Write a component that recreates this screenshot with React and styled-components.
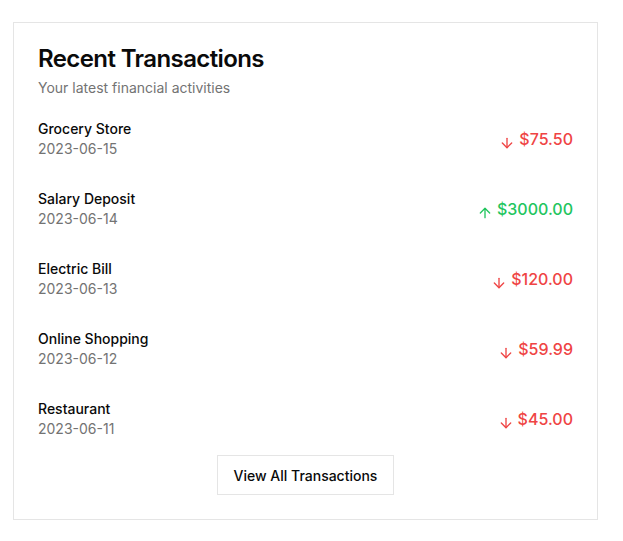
import React from "react";
import styled, { createGlobalStyle } from "styled-components";

const Global = createGlobalStyle`
  html, body { margin: 0; padding: 0; background: #ffffff; }
  body { font-family: Inter, "Liberation Sans", sans-serif; color: #0a0a0a; }
  * { box-sizing: border-box; }
`;

const Page = styled.div`
  padding: 22px 0 0 13px;
`;

const Card = styled.section`
  width: 585px;
  border: 1px solid #e5e5e5;
  background: #fff;
  padding: 24px;
  display: flex;
  flex-direction: column;
`;

const Header = styled.header`
  display: flex;
  flex-direction: column;
  gap: 7px;
  margin-bottom: 21px;
`;

const Title = styled.h2`
  margin: 0;
  font-size: 24px;
  line-height: 1;
  font-weight: 600;
  letter-spacing: -0.025em;
  color: #0a0a0a;
`;

const Subtitle = styled.p`
  margin: 0;
  font-size: 14px;
  line-height: 20px;
  color: #737373;
`;

const List = styled.ul`
  list-style: none;
  margin: 0;
  padding: 0;
  display: flex;
  flex-direction: column;
  gap: 30px;
`;

const Row = styled.li`
  display: flex;
  align-items: center;
  justify-content: space-between;
`;

const Info = styled.div`
  display: flex;
  flex-direction: column;
`;

const Name = styled.span`
  font-size: 14px;
  line-height: 20px;
  font-weight: 500;
  color: #0a0a0a;
`;

const DateText = styled.span`
  font-size: 14px;
  line-height: 20px;
  color: #737373;
`;

const Amount = styled.span`
  display: flex;
  align-items: center;
  gap: 4px;
  font-size: 16px;
  line-height: 24px;
  font-weight: 500;
  color: ${(p) => (p.$income ? "#22c55e" : "#ef4444")};
`;

const ArrowIcon = styled.svg`
  flex: none;
  margin-top: 8px;
`;

const Footer = styled.div`
  display: flex;
  justify-content: center;
  margin-top: 16px;
`;

const Button = styled.button`
  height: 40px;
  padding: 0 16px;
  border: 1px solid #e5e5e5;
  background: #fff;
  font-family: inherit;
  font-size: 14px;
  font-weight: 500;
  color: #0a0a0a;
  cursor: pointer;
`;

const Arrow = ({ up }) => (
  <ArrowIcon width="16" height="16" viewBox="0 0 24 24" fill="none" stroke="currentColor" strokeWidth="2" strokeLinecap="round" strokeLinejoin="round">
    {up ? (
      <>
        <path d="m5 12 7-7 7 7" />
        <path d="M12 19V5" />
      </>
    ) : (
      <>
        <path d="M12 5v14" />
        <path d="m19 12-7 7-7-7" />
      </>
    )}
  </ArrowIcon>
);

const data = [
  { name: "Grocery Store", date: "2023-06-15", amount: "$75.50", income: false },
  { name: "Salary Deposit", date: "2023-06-14", amount: "$3000.00", income: true },
  { name: "Electric Bill", date: "2023-06-13", amount: "$120.00", income: false },
  { name: "Online Shopping", date: "2023-06-12", amount: "$59.99", income: false },
  { name: "Restaurant", date: "2023-06-11", amount: "$45.00", income: false },
];

export default function App() {
  return (
    <Page>
      <Global />
      <Card>
        <Header>
          <Title>Recent Transactions</Title>
          <Subtitle>Your latest financial activities</Subtitle>
        </Header>
        <List>
          {data.map((t) => (
            <Row key={t.name}>
              <Info>
                <Name>{t.name}</Name>
                <DateText>{t.date}</DateText>
              </Info>
              <Amount $income={t.income}>
                <Arrow up={t.income} />
                {t.amount}
              </Amount>
            </Row>
          ))}
        </List>
        <Footer>
          <Button>View All Transactions</Button>
        </Footer>
      </Card>
    </Page>
  );
}
